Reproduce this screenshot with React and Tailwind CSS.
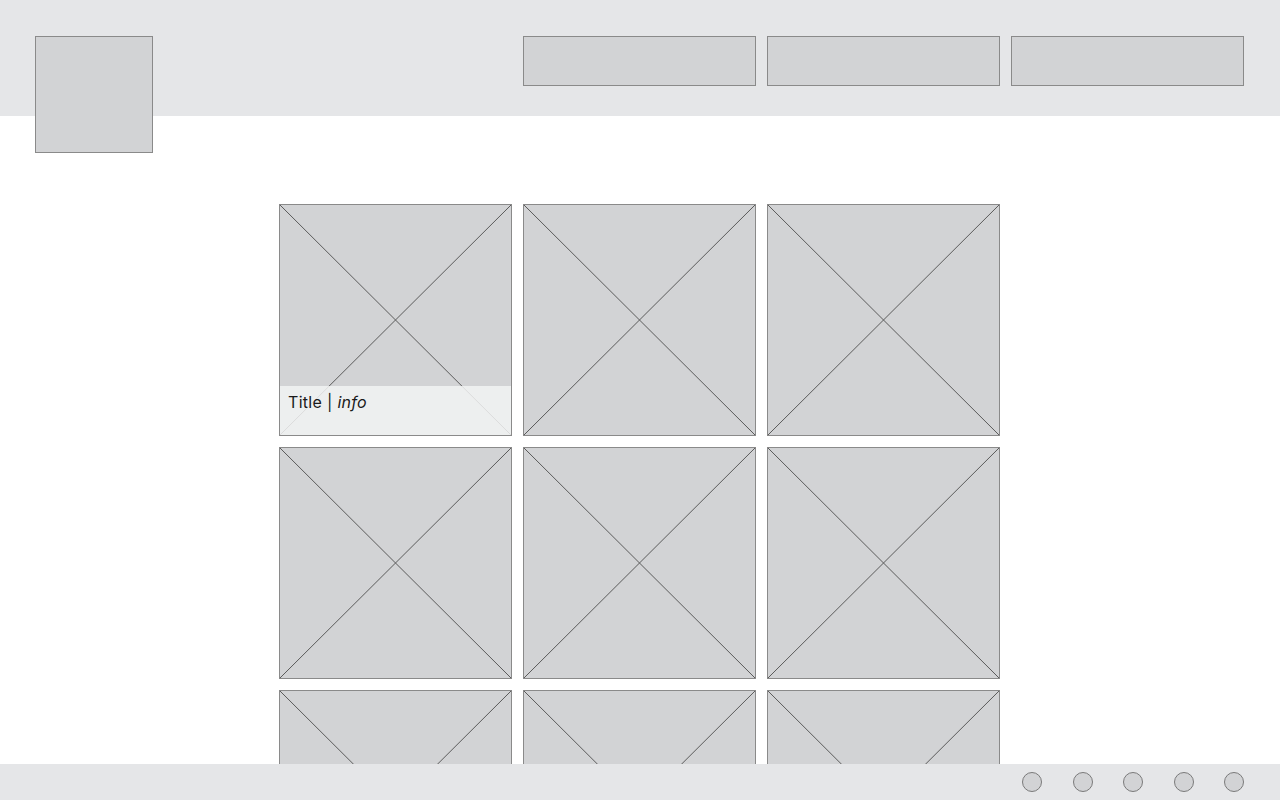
import React from "react";

function Tile({ caption }) {
  return (
    <div className="relative w-[233px] h-[232px] bg-[#d2d3d5] border border-[#8a8a8a] shrink-0">
      <svg className="absolute inset-0 w-full h-full" viewBox="0 0 100 100" preserveAspectRatio="none">
        <line x1="0" y1="0" x2="100" y2="100" stroke="#5a5a5a" strokeWidth="1" vectorEffect="non-scaling-stroke" />
        <line x1="100" y1="0" x2="0" y2="100" stroke="#5a5a5a" strokeWidth="1" vectorEffect="non-scaling-stroke" />
      </svg>
      {caption && (
        <div className="absolute left-0 right-0 bottom-0 h-[49px] bg-[#f2f3f3]/85 px-2 pt-[4px] text-[16px] text-[#1a1a1a] tracking-[0.3px]" style={{ fontFamily: "Inter, 'Liberation Sans', sans-serif" }}>
          Title | <i>info</i>
        </div>
      )}
    </div>
  );
}

export default function App() {
  const rows = [0, 1, 2];
  return (
    <div className="relative w-full h-screen overflow-hidden bg-white" style={{ fontFamily: "Inter, 'Liberation Sans', sans-serif" }}>
      <header className="h-[116px] bg-[#e5e6e8] flex items-start justify-between pl-[35px] pr-[36px] pt-[36px]">
        <div className="w-[118px] h-[117px] bg-[#d2d3d5] border border-[#8a8a8a] relative z-10" />
        <nav className="flex gap-[11px]">
          <div className="w-[233px] h-[50px] bg-[#d2d3d5] border border-[#8a8a8a]" />
          <div className="w-[233px] h-[50px] bg-[#d2d3d5] border border-[#8a8a8a]" />
          <div className="w-[233px] h-[50px] bg-[#d2d3d5] border border-[#8a8a8a]" />
        </nav>
      </header>
      <main className="pt-[88px] pl-[279px]">
        <div className="flex flex-col gap-[11px]">
          {rows.map((r) => (
            <div key={r} className="flex gap-[11px]">
              <Tile caption={r === 0} />
              <Tile />
              <Tile />
            </div>
          ))}
        </div>
      </main>
      <footer className="fixed left-0 right-0 bottom-0 h-[36px] bg-[#e5e6e8] flex items-center justify-end pr-[36px] gap-[30.5px]">
        {[0, 1, 2, 3, 4].map((i) => (
          <div key={i} className="w-[20px] h-[20px] rounded-full bg-[#d2d3d5] border border-[#7a7a7a]" />
        ))}
      </footer>
    </div>
  );
}
